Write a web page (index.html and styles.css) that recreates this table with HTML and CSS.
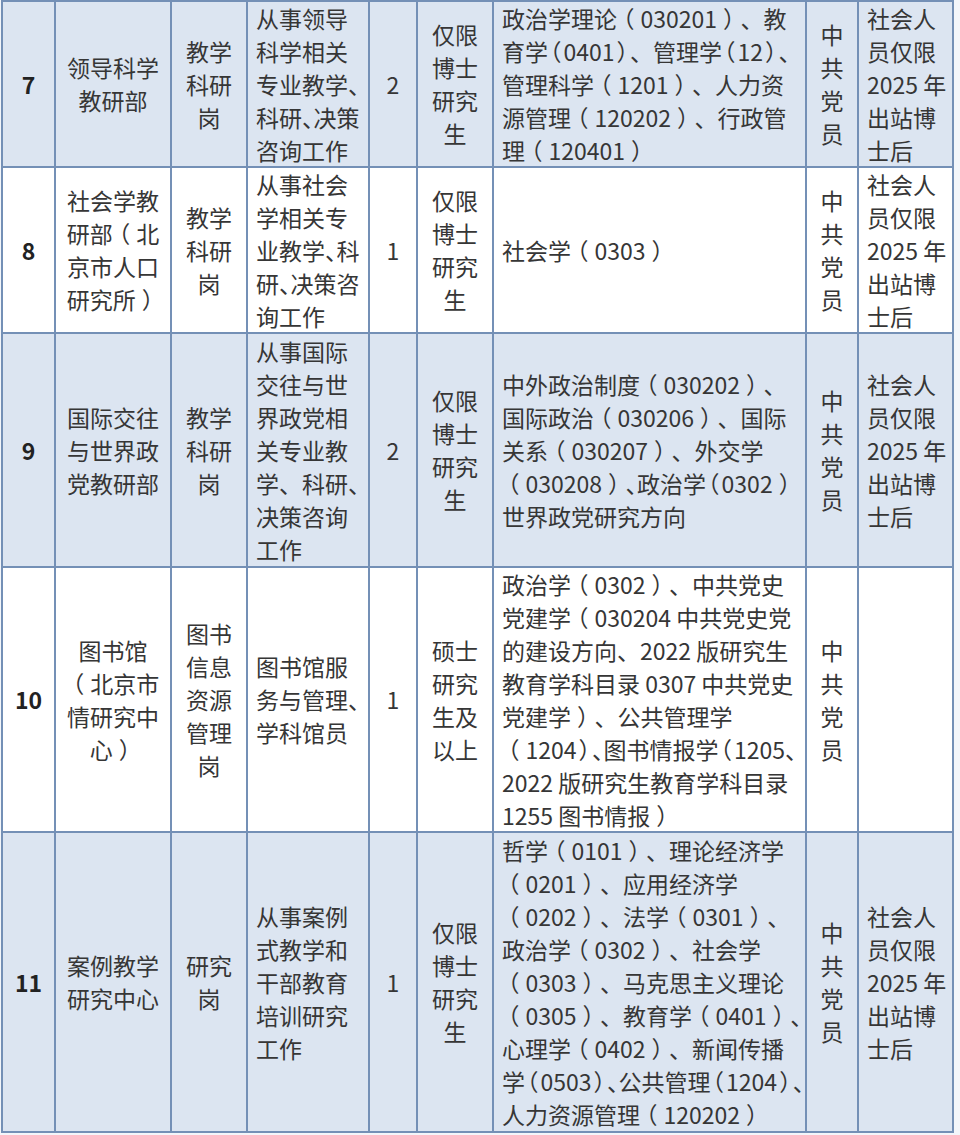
FILE: index.html
```html
<!DOCTYPE html>
<html lang="zh-CN">
<head>
<meta charset="utf-8">
<title>岗位信息表</title>
<link rel="stylesheet" href="styles.css">
</head>
<body>
<div class="tbl">
  <div class="row alt">
    <div class="c num"><div class="t">7</div></div>
    <div class="c ctr"><div class="t">领导科学<br>教研部</div></div>
    <div class="c ctr"><div class="t">教学<br>科研<br>岗</div></div>
    <div class="c lft"><div class="t">从事领导<br>科学相关<br>专业教学<i class="h">、</i><br>科研<i class="h">、</i>决策<br>咨询工作</div></div>
    <div class="c ctr"><div class="t">2</div></div>
    <div class="c ctr"><div class="t">仅限<br>博士<br>研究<br>生</div></div>
    <div class="c lft"><div class="t">政治学理论<i class="o">（</i>030201<i class="o">）</i>、教<br>育学<i class="p">（</i>0401<i class="p">）</i>、管理学<i class="p">（</i>12<i class="p">）</i>、<br>管理科学<i class="o">（</i>1201<i class="o">）</i>、人力资<br>源管理<i class="o">（</i>120202<i class="o">）</i>、行政管<br>理<i class="o">（</i>120401<i class="o">）</i></div></div>
    <div class="c ctr"><div class="t">中<br>共<br>党<br>员</div></div>
    <div class="c lft"><div class="t">社会人<br>员仅限<br>2025 年<br>出站博<br>士后</div></div>
  </div>

  <div class="row">
    <div class="c num"><div class="t">8</div></div>
    <div class="c ctr"><div class="t">社会学教<br>研部<i class="o">（</i>北<br>京市人口<br>研究所<i class="o">）</i></div></div>
    <div class="c ctr"><div class="t">教学<br>科研<br>岗</div></div>
    <div class="c lft"><div class="t">从事社会<br>学相关专<br>业教学<i class="h">、</i>科<br>研<i class="h">、</i>决策咨<br>询工作</div></div>
    <div class="c ctr"><div class="t">1</div></div>
    <div class="c ctr"><div class="t">仅限<br>博士<br>研究<br>生</div></div>
    <div class="c lft"><div class="t">社会学<i class="o">（</i>0303<i class="o">）</i></div></div>
    <div class="c ctr"><div class="t">中<br>共<br>党<br>员</div></div>
    <div class="c lft"><div class="t">社会人<br>员仅限<br>2025 年<br>出站博<br>士后</div></div>
  </div>

  <div class="row alt">
    <div class="c num"><div class="t">9</div></div>
    <div class="c ctr"><div class="t">国际交往<br>与世界政<br>党教研部</div></div>
    <div class="c ctr"><div class="t">教学<br>科研<br>岗</div></div>
    <div class="c lft"><div class="t">从事国际<br>交往与世<br>界政党相<br>关专业教<br>学、科研<i class="h">、</i><br>决策咨询<br>工作</div></div>
    <div class="c ctr"><div class="t">2</div></div>
    <div class="c ctr"><div class="t">仅限<br>博士<br>研究<br>生</div></div>
    <div class="c lft"><div class="t">中外政治制度<i class="o">（</i>030202<i class="o">）</i>、<br>国际政治<i class="o">（</i>030206<i class="o">）</i>、国际<br>关系<i class="o">（</i>030207<i class="o">）</i>、外交学<br><i class="o">（</i>030208<i class="o">）</i><i class="h">、</i>政治学<i class="p">（</i>0302<i class="o">）</i><br>世界政党研究方向</div></div>
    <div class="c ctr"><div class="t">中<br>共<br>党<br>员</div></div>
    <div class="c lft"><div class="t">社会人<br>员仅限<br>2025 年<br>出站博<br>士后</div></div>
  </div>

  <div class="row">
    <div class="c num"><div class="t">10</div></div>
    <div class="c ctr"><div class="t">图书馆<br><i class="o">（</i>北京市<br>情研究中<br>心<i class="o">）</i></div></div>
    <div class="c ctr"><div class="t">图书<br>信息<br>资源<br>管理<br>岗</div></div>
    <div class="c lft"><div class="t">图书馆服<br>务与管理<i class="h">、</i><br>学科馆员</div></div>
    <div class="c ctr"><div class="t">1</div></div>
    <div class="c ctr"><div class="t">硕士<br>研究<br>生及<br>以上</div></div>
    <div class="c lft"><div class="t">政治学<i class="o">（</i>0302<i class="o">）</i>、中共党史<br>党建学<i class="o">（</i>030204 中共党史党<br>的建设方向、2022 版研究生<br>教育学科目录 0307 中共党史<br>党建学<i class="o">）</i>、公共管理学<br><i class="o">（</i>1204<i class="p">）</i><i class="h">、</i>图书情报学<i class="p">（</i>1205、<br>2022 版研究生教育学科目录<br>1255 图书情报<i class="o">）</i></div></div>
    <div class="c ctr"><div class="t">中<br>共<br>党<br>员</div></div>
    <div class="c lft"><div class="t"></div></div>
  </div>

  <div class="row alt">
    <div class="c num"><div class="t">11</div></div>
    <div class="c ctr"><div class="t">案例教学<br>研究中心</div></div>
    <div class="c ctr"><div class="t">研究<br>岗</div></div>
    <div class="c lft"><div class="t">从事案例<br>式教学和<br>干部教育<br>培训研究<br>工作</div></div>
    <div class="c ctr"><div class="t">1</div></div>
    <div class="c ctr"><div class="t">仅限<br>博士<br>研究<br>生</div></div>
    <div class="c lft"><div class="t">哲学<i class="o">（</i>0101<i class="o">）</i>、理论经济学<br><i class="o">（</i>0201<i class="o">）</i>、应用经济学<br><i class="o">（</i>0202<i class="o">）</i>、法学<i class="o">（</i>0301<i class="o">）</i>、<br>政治学<i class="o">（</i>0302<i class="o">）</i>、社会学<br><i class="o">（</i>0303<i class="o">）</i>、马克思主义理论<br><i class="o">（</i>0305<i class="o">）</i>、教育学<i class="o">（</i>0401<i class="o">）</i><i class="h">、</i><br>心理学<i class="o">（</i>0402<i class="o">）</i>、新闻传播<br>学<i class="p">（</i>0503<i class="p">）</i><i class="h">、</i>公共管理<i class="p">（</i>1204<i class="p">）</i><i class="h">、</i><br>人力资源管理<i class="o">（</i>120202<i class="o">）</i></div></div>
    <div class="c ctr"><div class="t">中<br>共<br>党<br>员</div></div>
    <div class="c lft"><div class="t">社会人<br>员仅限<br>2025 年<br>出站博<br>士后</div></div>
  </div>
</div>
</body>
</html>
```

FILE: styles.css
```css
html, body {
  margin: 0;
  padding: 0;
  background: #f3f6fa;
}

body {
  padding-left: 1px;
  font-family: "Noto Sans CJK SC", "Noto Sans", sans-serif;
  font-size: 23px;
  line-height: 33px;
  color: #363636;
  text-spacing-trim: space-all;
  text-autospace: no-autospace;
}

.tbl {
  display: grid;
  width: 953px;
  box-sizing: border-box;
  grid-template-columns: 53px 116px 76px 122px 48px 76px 313px 52px 95px;
  grid-template-rows: 166px 166px 234px 265px 300px;
  border-left: 2px solid #7490b6;
  border-top: 2px solid #7490b6;
}

.row {
  display: contents;
}

.c {
  box-sizing: border-box;
  display: flex;
  align-items: center;
  border-right: 2px solid #7490b6;
  border-bottom: 2px solid #7490b6;
  background: #ffffff;
  overflow: visible;
}

.alt > .c {
  background: #dce5f1;
}

.t {
  white-space: nowrap;
}

.t i {
  font-style: normal;
}

.ctr {
  justify-content: center;
  text-align: center;
}

.lft {
  justify-content: flex-start;
  text-align: left;
  padding-left: 8px;
}

.num {
  justify-content: center;
  font-weight: 700;
  color: #222222;
}

/* full-width bracket, glyph centred in its box */
.o {
  font-feature-settings: "halt";
  padding: 0 6px;
}

/* compressed bracket */
.p {
  font-feature-settings: "halt";
  padding: 0 2px;
}

/* compressed comma */
.h {
  font-feature-settings: "halt";
}
```
